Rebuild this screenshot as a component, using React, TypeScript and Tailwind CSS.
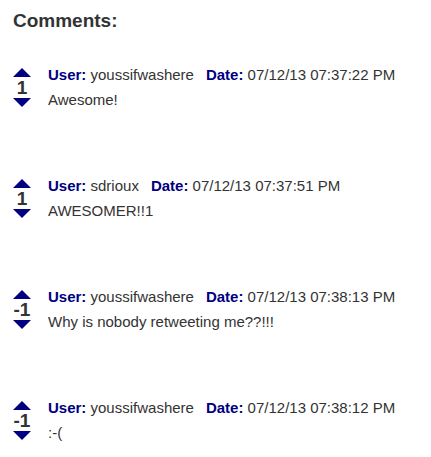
const comments = [
  { votes: "1", user: "youssifwashere", date: "07/12/13 07:37:22 PM", text: "Awesome!" },
  { votes: "1", user: "sdrioux", date: "07/12/13 07:37:51 PM", text: "AWESOMER!!1" },
  { votes: "-1", user: "youssifwashere", date: "07/12/13 07:38:13 PM", text: "Why is nobody retweeting me??!!!" },
  { votes: "-1", user: "youssifwashere", date: "07/12/13 07:38:12 PM", text: ":-(" },
]

function Arrow({ down }: { down?: boolean }) {
  return (
    <svg width="18" height="9" viewBox="0 0 18 9" className="block">
      {down ? (
        <polygon points="0,0 18,0 9,9" fill="#000080" />
      ) : (
        <polygon points="0,9 18,9 9,0" fill="#000080" />
      )}
    </svg>
  )
}

export default function App() {
  return (
    <div className="min-h-screen bg-white pl-[13px] pt-[10px] text-[#333] font-['Liberation_Sans',Arial,sans-serif]">
      <h2 className="text-[19px] leading-[22px] font-bold">Comments:</h2>

      <div className="mt-[30px]">
        {comments.map((c, i) => (
          <div key={i} className="flex pb-[61px] last:pb-0">
            {/* vote column */}
            <div className="w-[18px] flex flex-col items-center pt-[6px]">
              <Arrow />
              <div className="mt-[2px] text-[19px] leading-[17px] font-bold text-[#333] whitespace-nowrap">{c.votes}</div>
              <div className="mt-[2px]">
                <Arrow down />
              </div>
            </div>

            <div className="ml-[17px] text-[15px] leading-[25px]">
              <div className="whitespace-nowrap">
                <span className="font-bold text-[#000080]">User:</span> {c.user}
                <span className="ml-[12px] font-bold text-[#000080]">Date:</span> {c.date}
              </div>
              <div>{c.text}</div>
            </div>
          </div>
        ))}
      </div>
    </div>
  )
}
